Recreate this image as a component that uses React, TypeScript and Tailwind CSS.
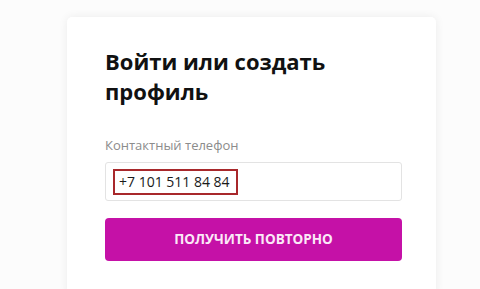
export default function App() {
  return (
    <div className="min-h-[289px] w-[480px] overflow-hidden bg-[#fcfcfc] font-['Open_Sans',sans-serif]">
      <div className="ml-[67px] mt-[17px] h-[280px] w-[369px] rounded-[5px] bg-white pl-[38px] pr-[34px] pt-[29px] shadow-[0_0_10px_rgba(0,0,0,0.07)]">
        <h1 className="text-[22px] font-bold leading-[30px] text-[#111]">
          Войти или создать
          <br />
          профиль
        </h1>
        <div className="mt-[30px] text-[13px] leading-[18px] text-[#8c8c8c]">Контактный телефон</div>
        <div className="mt-2 flex h-[39px] items-center rounded-[3px] border border-[#e3e3e3] bg-white pl-[7px]">
          <div className="flex h-[26px] w-[125px] items-center border-2 border-[#a8282b] pl-[4px] text-[14px] text-[#1a1a1a]">
            +7 101 511 84 84
          </div>
        </div>
        <button className="mt-[17px] flex h-[43px] w-full items-center justify-center rounded-[4px] bg-[#c511a7] text-[13.5px] font-bold uppercase text-[#fbe9f7]">
          Получить повторно
        </button>
      </div>
    </div>
  );
}
